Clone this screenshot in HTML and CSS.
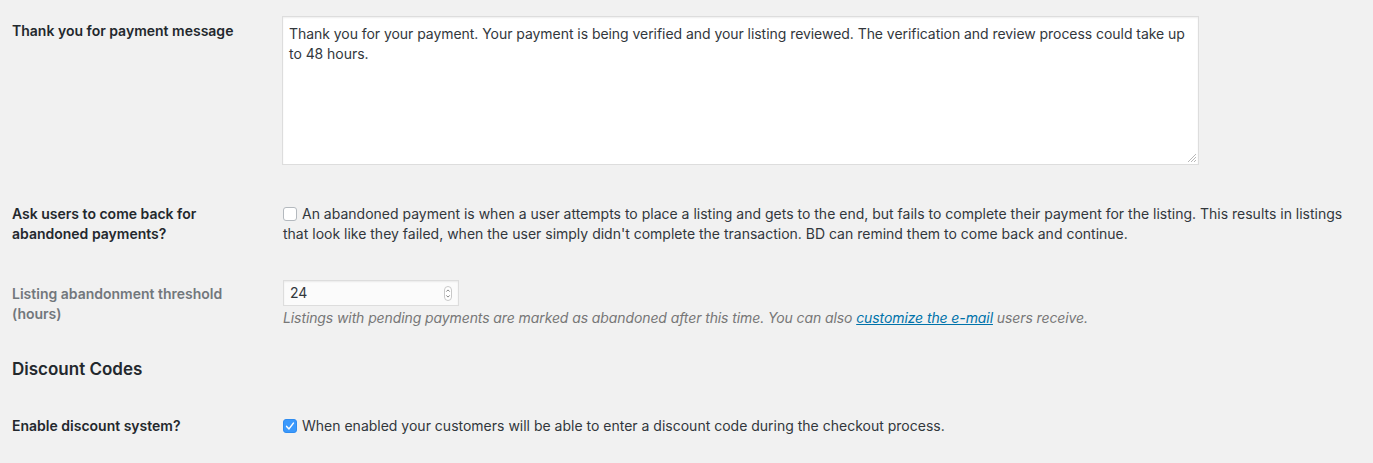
FILE: index.html
```html
<!DOCTYPE html>
<html>
<head>
<meta charset="utf-8">
<link rel="stylesheet" href="styles.css">
</head>
<body>
<div class="form">
  <div class="row row-msg">
    <div class="label">Thank you for payment message</div>
    <div class="field">
      <div class="textarea-wrap">
        <textarea class="textarea">Thank you for your payment. Your payment is being verified and your listing reviewed. The verification and review process could take up to 48 hours.</textarea>
        <svg class="grip" width="11" height="11" viewBox="0 0 11 11">
          <path d="M10 2 L2 10 M10 5 L5 10 M10 8 L8 10" stroke="#b8b8b8" stroke-width="1"/>
        </svg>
      </div>
    </div>
  </div>

  <div class="row row-abandon">
    <div class="label">Ask users to come back for abandoned payments?</div>
    <div class="field text"><span class="checkbox"></span>An abandoned payment is when a user attempts to place a listing and gets to the end, but fails to complete their payment for the listing. This results in listings that look like they failed, when the user simply didn't complete the transaction. BD can remind them to come back and continue.</div>
  </div>

  <div class="row row-threshold">
    <div class="label label-muted">Listing abandonment threshold (hours)</div>
    <div class="field">
      <div class="number">
        <span class="number-value">24</span>
        <span class="spinner">
          <svg width="8" height="15" viewBox="0 0 8 15">
            <rect x="0.5" y="0.5" width="7" height="14" rx="3.5" fill="#fff" stroke="#c8c8c8"/>
            <path d="M2.3 5.6 L4 3.9 L5.7 5.6" fill="none" stroke="#777" stroke-width="0.9"/>
            <path d="M2.3 9.4 L4 11.1 L5.7 9.4" fill="none" stroke="#777" stroke-width="0.9"/>
          </svg>
        </span>
      </div>
      <p class="description">Listings with pending payments are marked as abandoned after this time. You can also <a href="#">customize the e-mail</a> users receive.</p>
    </div>
  </div>

  <h2 class="section-title">Discount Codes</h2>

  <div class="row row-discount">
    <div class="label">Enable discount system?</div>
    <div class="field text"><span class="checkbox checked"><svg width="14" height="14" viewBox="0 0 14 14"><path d="M3.6 7.4 L6 9.9 L10.4 4.1" fill="none" stroke="#fff" stroke-width="1.5" stroke-linecap="round" stroke-linejoin="round"/></svg></span>When enabled your customers will be able to enter a discount code during the checkout process.</div>
  </div>
</div>
</body>
</html>
```

FILE: styles.css
```css
html, body {
  margin: 0;
  padding: 0;
  background: #f1f1f1;
}

body {
  font-family: Inter, "Liberation Sans", sans-serif;
  font-size: 14px;
  line-height: 20px;
  color: #32373c;
}

.form {
  padding: 0 12px;
}

.row {
  display: grid;
  grid-template-columns: 271px 1fr;
}

.label {
  font-weight: 600;
  color: #23282d;
  padding-right: 20px;
}

.label-muted {
  color: #72777c;
}

.row-msg {
  padding-top: 16px;
}

.row-msg .label {
  padding-top: 5px;
}

.textarea-wrap {
  position: relative;
  width: 917px;
  height: 149px;
  margin-left: -1px;
}

.textarea {
  display: block;
  box-sizing: border-box;
  width: 917px;
  height: 149px;
  margin: 0;
  padding: 7px 6px;
  border: 1px solid #dddddd;
  border-radius: 0;
  background: #fff;
  box-shadow: inset 0 1px 2px rgba(0, 0, 0, 0.07);
  font-family: inherit;
  font-size: 14px;
  line-height: 20px;
  letter-spacing: -0.05px;
  color: #32373c;
  resize: none;
  outline: none;
}

.grip {
  position: absolute;
  right: 2px;
  bottom: 2px;
}

.row-abandon {
  margin-top: 39px;
}

.text {
  padding-right: 12px;
}

.checkbox {
  display: inline-block;
  box-sizing: border-box;
  width: 14px;
  height: 14px;
  margin-right: 5px;
  vertical-align: -2px;
  border: 1px solid #b4b9be;
  border-radius: 3px;
  background: #fff;
  position: relative;
}

.checkbox.checked {
  background: #3b99fc;
  border-color: #2f8cf0;
}

.checkbox.checked svg {
  position: absolute;
  left: -1px;
  top: -1px;
}

.row-threshold {
  margin-top: 36px;
}

.row-threshold .label {
  padding-top: 4px;
}

.number {
  display: flex;
  align-items: center;
  justify-content: space-between;
  box-sizing: border-box;
  width: 176px;
  height: 26px;
  padding: 0 6px 0 6px;
  border: 1px solid #dddddd;
  background: #fbfbfb;
  box-shadow: inset 0 1px 2px rgba(0, 0, 0, 0.07);
}

.number-value {
  color: #32373c;
}

.spinner {
  display: flex;
}

.description {
  margin: 2px 0 0 0;
  font-style: italic;
  letter-spacing: -0.1px;
  color: #777777;
}

.description a {
  color: #0073aa;
  text-decoration: underline;
}

.section-title {
  margin: 29px 0 0 0;
  font-size: 17px;
  line-height: 24px;
  font-weight: 600;
  color: #23282d;
}

.row-discount {
  margin-top: 35px;
}
```
